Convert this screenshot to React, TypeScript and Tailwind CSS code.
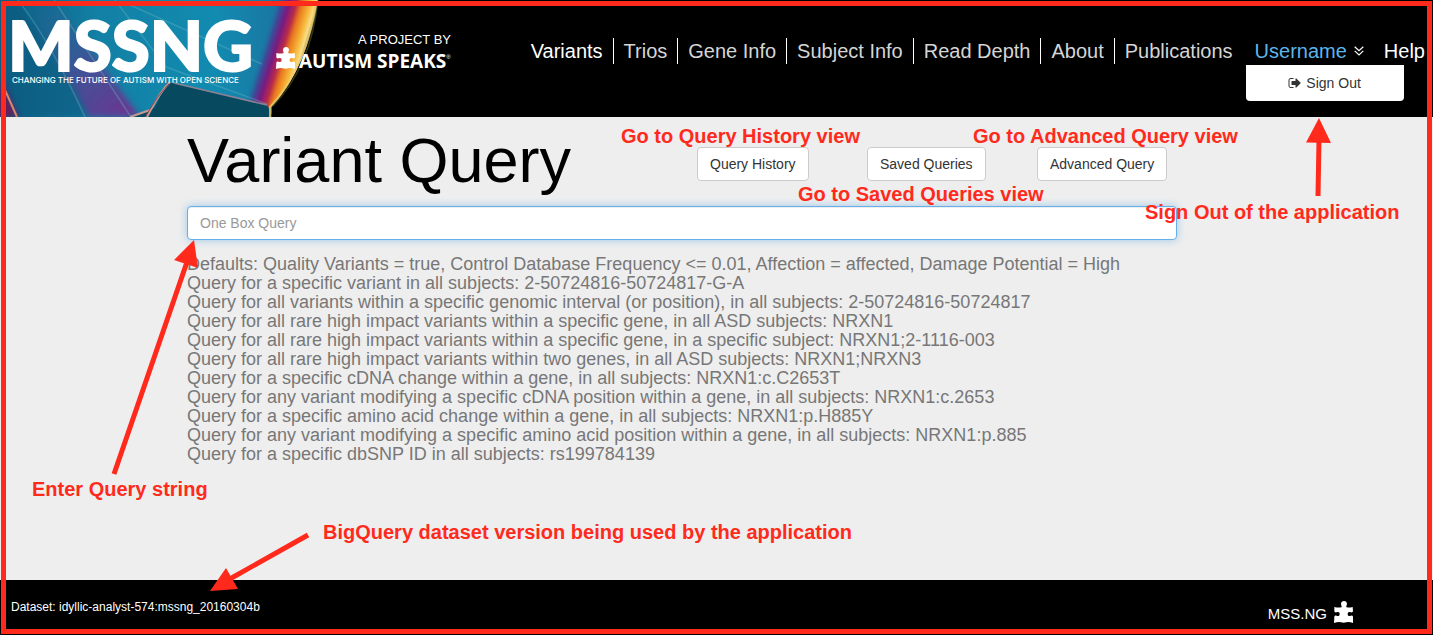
import React from "react";

const RED = "#ff2a1c";

const navItems = ["Variants", "Trios", "Gene Info", "Subject Info", "Read Depth", "About", "Publications"];

const examples = [
  "Defaults: Quality Variants = true, Control Database Frequency <= 0.01, Affection = affected, Damage Potential = High",
  "Query for a specific variant in all subjects: 2-50724816-50724817-G-A",
  "Query for all variants within a specific genomic interval (or position), in all subjects: 2-50724816-50724817",
  "Query for all rare high impact variants within a specific gene, in all ASD subjects: NRXN1",
  "Query for all rare high impact variants within a specific gene, in a specific subject: NRXN1;2-1116-003",
  "Query for all rare high impact variants within two genes, in all ASD subjects: NRXN1;NRXN3",
  "Query for a specific cDNA change within a gene, in all subjects: NRXN1:c.C2653T",
  "Query for any variant modifying a specific cDNA position within a gene, in all subjects: NRXN1:c.2653",
  "Query for a specific amino acid change within a gene, in all subjects: NRXN1:p.H885Y",
  "Query for any variant modifying a specific amino acid position within a gene, in all subjects: NRXN1:p.885",
  "Query for a specific dbSNP ID in all subjects: rs199784139",
];

function Puzzle({ className }: { className?: string }) {
  return (
    <svg viewBox="0 0 57 66" className={className} fill="#fff" aria-hidden="true">
      <path d="M1 18 Q14 21 22 19 C25 17 21 14 21 9 C21 3 25 0 30 0 C35 0 39 3 39 9 C38 14 35 17 38 19 Q45 21 56 18 L57 31 C55 36 51 34 48 33 C43 32 41 35 41 39 C41 43 43 46 48 45 C51 44 55 42 57 47 L57 66 Q46 62 37 64 Q29 66 21 64 Q12 62 0 66 L1 47 C3 42 7 44 10 45 C15 46 17 43 17 39 C17 35 15 32 10 33 C7 34 3 36 1 31 Z" />
    </svg>
  );
}

function Banner() {
  return (
    <svg viewBox="0 0 330 117" className="absolute left-0 top-0 h-[117px] w-[330px]" aria-hidden="true">
      <defs>
        <linearGradient id="blue" x1="0" y1="0" x2="1" y2="0">
          <stop offset="0" stopColor="#0b5c80" />
          <stop offset=".3" stopColor="#1380a5" />
          <stop offset=".65" stopColor="#128bb0" />
          <stop offset=".82" stopColor="#1979a4" />
          <stop offset="1" stopColor="#274b8c" />
        </linearGradient>
        <linearGradient id="flame" gradientUnits="userSpaceOnUse" x1="266" y1="30" x2="309" y2="43">
          <stop offset="0" stopColor="#1979a4" stopOpacity="0" />
          <stop offset=".16" stopColor="#3b4c99" />
          <stop offset=".32" stopColor="#7a1a80" />
          <stop offset=".48" stopColor="#b92a4a" />
          <stop offset=".6" stopColor="#e8781d" />
          <stop offset=".78" stopColor="#f7b83a" />
          <stop offset=".9" stopColor="#f7e08c" />
          <stop offset="1" stopColor="#554018" />
        </linearGradient>
        <linearGradient id="violet" x1="0" y1="0" x2="1" y2="1">
          <stop offset="0" stopColor="#256894" stopOpacity="0" />
          <stop offset=".55" stopColor="#4a4894" stopOpacity=".8" />
          <stop offset="1" stopColor="#74308f" />
        </linearGradient>
        <filter id="soft" x="-30%" y="-30%" width="160%" height="160%">
          <feGaussianBlur stdDeviation="3" />
        </filter>
        <filter id="fine">
          <feGaussianBlur stdDeviation=".7" />
        </filter>
        <clipPath id="crystal">
          <path d="M0 0H318C313 35 299 76 272 107V117H0Z" />
        </clipPath>
      </defs>
      <g clipPath="url(#crystal)">
        <rect width="330" height="117" fill="url(#blue)" />
        <path d="M18 0L55 0L140 117H88Z" fill="url(#violet)" filter="url(#soft)" />
        <path d="M0 0H18L74 88L88 117H16L0 78Z" fill="#0b5b82" opacity=".65" filter="url(#soft)" />
        <path d="M0 78L18 117H-5Z" fill="#681c5d" filter="url(#soft)" />
        <path d="M262 0H320C313 38 298 80 270 108L240 100L250 60Z" fill="url(#flame)" />
        <path d="M168 82L267 105L273 117H128L154 108Z" fill="#074a60" />
        <path d="M174 83L267 105" stroke="#8b8194" strokeWidth="1.5" fill="none" filter="url(#fine)" />
        <path d="M170 82C158 94 153 106 147 117M150 110L130 117" stroke="#c79a91" strokeWidth="2" fill="none" filter="url(#fine)" />
        <path d="M169 84C157 96 151 108 145 117" stroke="#8a4052" strokeWidth="1" fill="none" />
        <path d="M18 0C39 27 60 62 85 117M54 0L131 117M115 0L166 67L267 104M130 5L262 64" stroke="#67b7c3" strokeWidth="1.5" opacity=".35" fill="none" filter="url(#fine)" />
        <path d="M5 90L17 117" stroke="#d4896e" strokeWidth="2" filter="url(#fine)" />
      </g>
      <path d="M316 0C311 39 297 79 270 107V117" stroke="#f2ca68" strokeWidth="2" opacity=".8" fill="none" filter="url(#fine)" />
      <path d="M318 0C314 38 301 77 273 106" stroke="#667326" strokeWidth="1.5" opacity=".5" fill="none" filter="url(#fine)" />
    </svg>
  );
}

const actionButton =
  "h-[34px] cursor-pointer rounded border border-[#cccccc] bg-white px-3 text-sm text-[#333333] whitespace-nowrap";

export default function App() {
  return (
    <div className="relative flex min-h-screen flex-col overflow-hidden bg-[#eeeeee] font-['Liberation_Sans',Arial,sans-serif]">
      <header className="relative flex h-[117px] items-start justify-between bg-black text-white">
        <Banner />
        <div className="relative flex">
          <a href="#home" className="block w-[276px] pt-2.5 pl-2">
            <span className="block h-[65px] font-['Lato',sans-serif] text-[69px] leading-[70px] font-black [-webkit-text-stroke:2px_white]">
              MSSNG
            </span>
            <span className="block pl-1 font-['Inter',sans-serif] text-[8px] leading-[10px] font-medium whitespace-nowrap">
              CHANGING THE FUTURE OF AUTISM WITH OPEN SCIENCE
            </span>
          </a>
          <a href="#autism-speaks" className="flex w-[177px] flex-col pt-8">
            <span className="self-end pr-0.5 text-[13px] leading-4 whitespace-nowrap">A PROJECT BY</span>
            <span className="flex items-start">
              <Puzzle className="-mt-px h-[22px] w-[19px] shrink-0" />
              <span className="pl-1 font-['Open_Sans',sans-serif] text-[19px] leading-[26px] font-bold whitespace-nowrap">
                AUTISM SPEAKS
              </span>
              <sup className="top-1.5 text-[6px] leading-none">®</sup>
            </span>
          </a>
        </div>
        <nav className="relative flex pt-[38px] pr-2 text-[20px] leading-[26px] whitespace-nowrap" aria-label="Main">
          {navItems.map((item, i) => (
            <a
              key={item}
              href="#"
              className={
                i === 0
                  ? "border-r border-white pr-2.5 text-white"
                  : i === navItems.length - 1
                    ? "pl-2.5 text-[#d5d5d5]"
                    : "border-r border-white px-2.5 text-[#d5d5d5]"
              }
            >
              {item}
            </a>
          ))}
          <div className="relative pl-[22px]">
            <button type="button" aria-expanded="true" className="flex cursor-pointer items-center gap-[7px] text-[#5db5ea]">
              Username
              <svg viewBox="0 0 10 10" className="h-2.5 w-2.5" fill="none" stroke="#fff" strokeWidth="1.2" aria-hidden="true">
                <path d="M.7.7L5 4.7L9.3.7M.7 4.9L5 8.9L9.3 4.9" />
              </svg>
            </button>
            <button
              type="button"
              className="absolute top-[27px] left-[13px] flex h-9 w-[158px] cursor-pointer items-center justify-center gap-1 rounded-b bg-white text-sm text-[#333333]"
            >
              <svg viewBox="0 0 1792 1792" className="h-3.5 w-3.5" fill="currentColor" aria-hidden="true">
                <path d="M704 1440q0 4 1 20t.5 26.5-3 23.5-10 19.5-20.5 6.5h-320q-119 0-203.5-84.5T64 1248V544q0-119 84.5-203.5T352 256h320q13 0 22.5 9.5T704 288q0 4 1 20t.5 26.5-3 23.5-10 19.5T672 384H352q-66 0-113 47t-47 113v704q0 66 47 113t113 47h312l11.5 1 11.5 3 8 5.5 7 9 2 13.5zm928-544q0 26-19 45l-544 544q-19 19-45 19t-45-19-19-45v-288H512q-26 0-45-19t-19-45V704q0-26 19-45t45-19h448V352q0-26 19-45t45-19 45 19l544 544q19 19 19 45z" />
              </svg>
              Sign Out
            </button>
          </div>
          <a href="#help" className="pl-5 text-white">Help</a>
        </nav>
      </header>

      <main className="flex-1 pr-64 pl-[187px]">
        <div className="grid h-[89px] grid-cols-[510px_170px_170px_1fr] items-start">
          <h1 className="pt-2 text-[63px] leading-[70px] whitespace-nowrap text-black">Variant Query</h1>
          <div className="pt-[30px]">
            <button type="button" className={actionButton}>Query History</button>
          </div>
          <div className="pt-[30px]">
            <button type="button" className={actionButton}>Saved Queries</button>
          </div>
          <div className="pt-[30px]">
            <button type="button" className={actionButton}>Advanced Query</button>
          </div>
        </div>
        <input
          type="text"
          aria-label="One Box Query"
          placeholder="One Box Query"
          className="block h-[34px] w-full rounded border border-[#66afe9] bg-white px-3 text-sm text-[#555555] shadow-[inset_0_1px_1px_rgba(0,0,0,0.075),0_0_8px_rgba(102,175,233,0.6)] outline-none placeholder:text-[#999999]"
        />
        <div className="pt-[15px] text-[18px] leading-[19px] whitespace-nowrap text-[#777777]">
          {examples.map((line) => (
            <p key={line}>{line}</p>
          ))}
        </div>
      </main>

      <footer className="flex h-[55px] items-start justify-between bg-black pr-20 pl-[11px] text-white">
        <p className="pt-[19px] text-[12px] leading-4">Dataset: idyllic-analyst-574:mssng_20160304b</p>
        <a href="#mssng" className="flex gap-[7px] pt-[21px]">
          <span className="pt-1 text-[15px] leading-[18px]">MSS.NG</span>
          <Puzzle className="h-[22px] w-[19px] shrink-0" />
        </a>
      </footer>

      <div className="pointer-events-none absolute inset-0 text-[20px] leading-6 font-bold whitespace-nowrap text-[#ff2a1c]">
        <div className="absolute inset-px border-5 border-[#ff2a1c]" />
        <p className="absolute top-[124px] left-[621px]">Go to Query History view</p>
        <p className="absolute top-[124px] left-[973px]">Go to Advanced Query view</p>
        <p className="absolute top-[182px] left-[798px]">Go to Saved Queries view</p>
        <p className="absolute top-[200px] left-[1145px]">Sign Out of the application</p>
        <p className="absolute top-[477px] left-8">Enter Query string</p>
        <p className="absolute top-[520px] left-[323px]">BigQuery dataset version being used by the application</p>
        <svg viewBox="0 0 1433 635" className="absolute top-0 left-0 h-[635px] w-[1433px]" stroke={RED} strokeWidth="5" fill={RED} aria-hidden="true">
          <path d="M1318 196L1319 140M114 474L187 262M308 535L228 580" />
          <path stroke="none" d="M1319 118L1306 142.500L1331 143Z M194 240L174 260L198 268Z M210 591L226 568L238 589Z" />
        </svg>
      </div>
    </div>
  );
}
